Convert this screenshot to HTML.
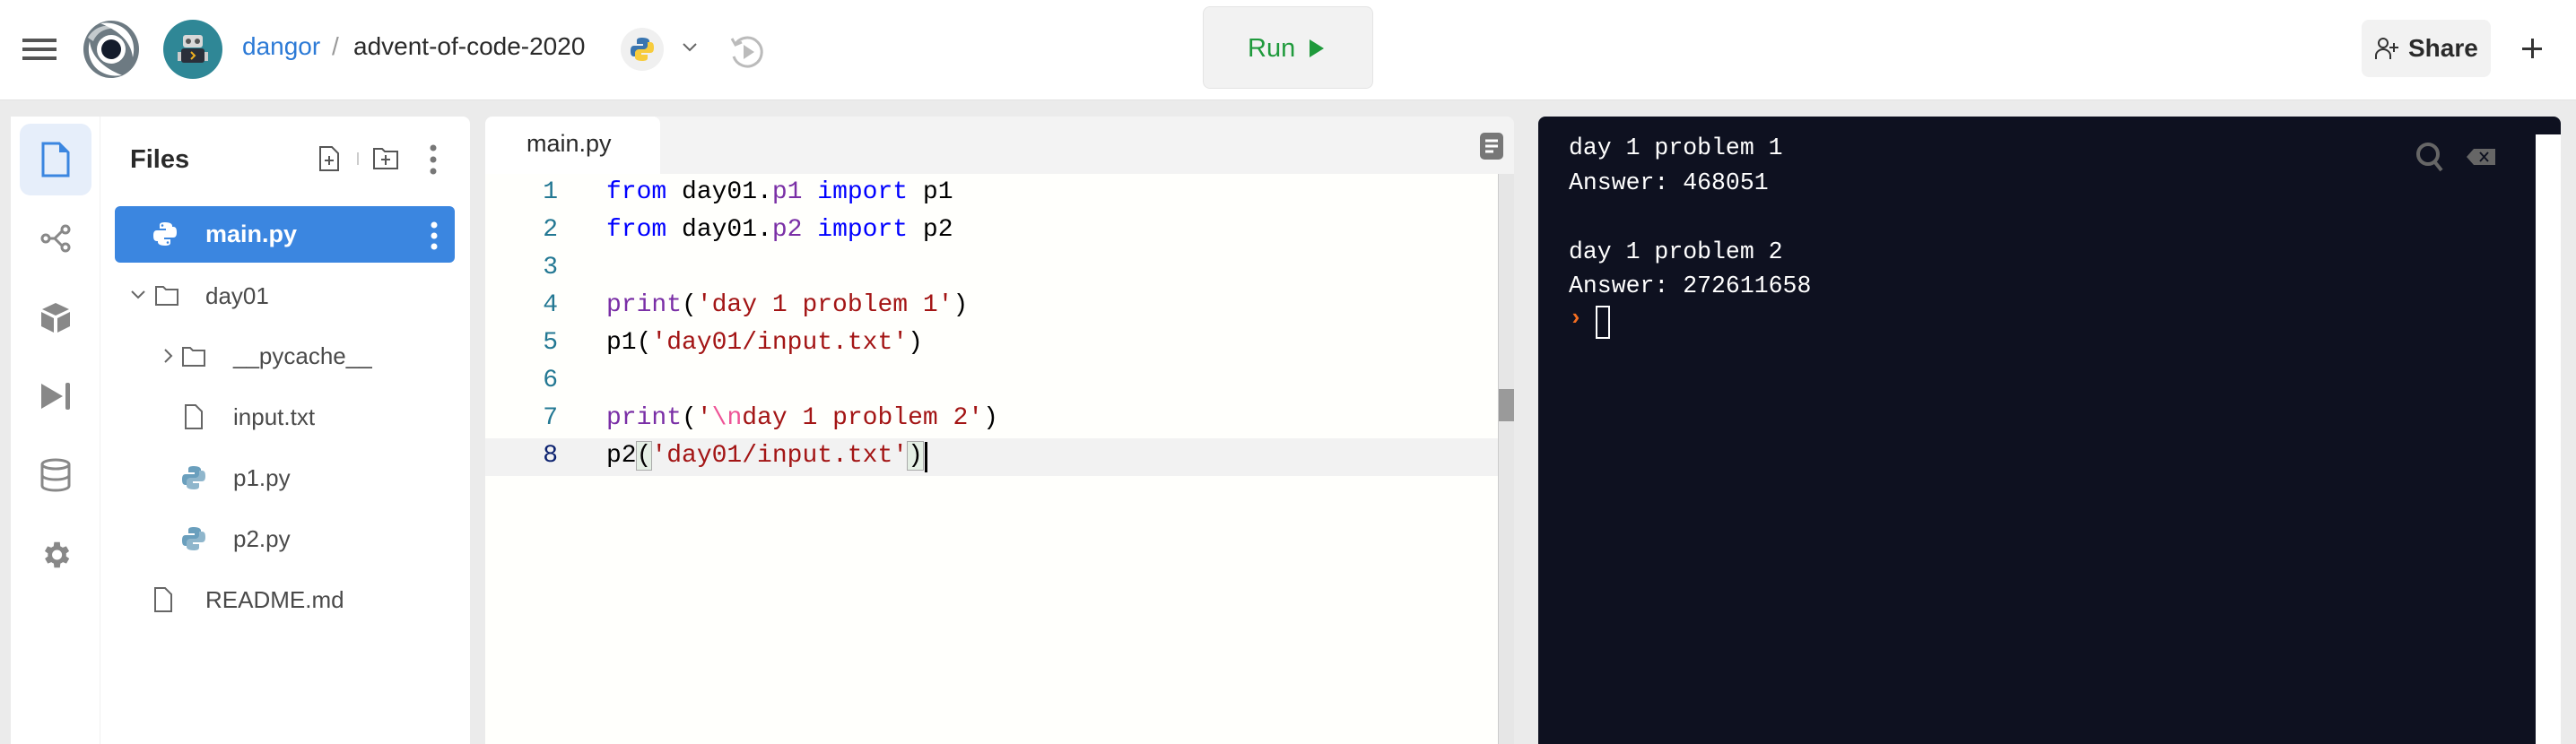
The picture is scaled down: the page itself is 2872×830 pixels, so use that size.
<!DOCTYPE html>
<html><head><meta charset="utf-8"><style>
*{margin:0;padding:0;box-sizing:border-box}
body{width:2872px;height:830px;overflow:hidden;background:#ebebeb;font-family:"Liberation Sans",sans-serif;position:relative}
.a{position:absolute}
.hdr{left:0;top:0;width:2872px;height:112px;background:#fff;border-bottom:1px solid #e2e2e2}
.mono{font-family:"Liberation Mono","DejaVu Sans Mono",monospace}
.ft{font-size:26px;color:#4a4a4a;line-height:30px}
.ln{left:560px;width:62px;text-align:right;color:#237893;font-size:28px}
.cl{left:676px;font-size:28px;color:#000;white-space:pre}
.kw{color:#0000ff}.pu{color:#7a2fa6}.st{color:#a31515}.es{color:#ee5396}
.tl{left:1749px;color:#fff;font-size:26.5px;white-space:pre}
</style></head><body>
<div class="a hdr"></div>
<div class="a" style="left:25px;top:43px;width:38px;height:4px;background:#555"></div>
<div class="a" style="left:25px;top:53px;width:38px;height:4px;background:#555"></div>
<div class="a" style="left:25px;top:63px;width:38px;height:4px;background:#555"></div>
<svg class="a" style="left:92px;top:22px" width="64" height="66" viewBox="0 0 64 66">
<ellipse cx="32" cy="33" rx="31" ry="32" fill="#6d7a82"/>
<path d="M20 4 C44 0 62 18 56 42 C54 24 40 12 20 4 Z" fill="#fff"/>
<path d="M44 62 C20 66 2 48 8 24 C10 42 24 54 44 62 Z" fill="#fff"/>
<path d="M6 20 C14 6 30 4 40 10 C26 8 16 14 12 24 Z" fill="#fff" opacity="0.6"/>
<circle cx="32" cy="33" r="16" fill="#fff"/>
<circle cx="32" cy="33" r="11" fill="#141c2c"/>
</svg>
<svg class="a" style="left:182px;top:22px" width="66" height="66" viewBox="0 0 66 66">
<circle cx="33" cy="33" r="33" fill="#2f8796"/>
<rect x="22" y="17" width="22" height="14" rx="3" fill="#d8d8d8"/>
<circle cx="28" cy="24" r="3" fill="#555"/><circle cx="38" cy="24" r="3" fill="#555"/>
<rect x="20" y="32" width="26" height="16" rx="3" fill="#2a2f3a"/>
<path d="M31 36 l4 4 l-4 4" stroke="#f0b020" stroke-width="2" fill="none"/>
<rect x="16" y="36" width="4" height="10" fill="#ccc"/><rect x="46" y="36" width="4" height="10" fill="#ccc"/>
</svg>
<div class="a" style="left:270px;top:36px;font-size:28px;color:#2c7ad6">dangor</div>
<div class="a" style="left:370px;top:36px;font-size:28px;color:#999">/</div>
<div class="a" style="left:394px;top:36px;font-size:28px;color:#2a2a2a">advent-of-code-2020</div>
<div class="a" style="left:692px;top:31px;width:48px;height:48px;border-radius:50%;background:#f0f0f0"></div>
<svg class="a" style="left:701px;top:40px" width="30" height="30" viewBox="0 0 30 30">
<path d="M15 2c-6 0-6 2-6 4v3h7v2H6c-3 0-4 2-4 6s1 6 4 6h3v-4c0-2 2-4 4-4h6c2 0 4-2 4-4V6c0-2-2-4-8-4z" fill="#3a75b0"/>
<path d="M15 28c6 0 6-2 6-4v-3h-7v-2h10c3 0 4-2 4-6s-1-6-4-6h-3v4c0 2-2 4-4 4h-6c-2 0-4 2-4 4v5c0 2 2 4 8 4z" fill="#f7cc3d"/>
</svg>
<svg class="a" style="left:760px;top:46px" width="18" height="14"><path d="M2 3l7 7 7-7" stroke="#666" stroke-width="2" fill="none"/></svg>
<svg class="a" style="left:810px;top:35px" width="46" height="46" viewBox="0 0 46 46">
<path d="M10 14 A16 16 0 1 1 8 28" stroke="#bbb" stroke-width="3" fill="none"/>
<path d="M6 8 l4 7 l7 -3" stroke="#bbb" stroke-width="3" fill="none"/>
<path d="M19 15 l12 8 l-12 8z" fill="#bbb"/>
</svg>
<div class="a" style="left:1341px;top:7px;width:190px;height:92px;background:#f2f2f2;border:1px solid #e4e4e4;border-radius:8px"></div>
<div class="a" style="left:1391px;top:38px;font-size:29px;color:#1f9a3c">Run</div>
<svg class="a" style="left:1458px;top:42px" width="20" height="24"><path d="M2 2l16 10-16 10z" fill="#1f9a3c"/></svg>
<div class="a" style="left:2633px;top:22px;width:144px;height:64px;background:#f2f2f2;border-radius:8px"></div>
<svg class="a" style="left:2647px;top:40px" width="28" height="28" viewBox="0 0 28 28"><circle cx="10" cy="8" r="5" stroke="#333" stroke-width="2" fill="none"/><path d="M2 26v-4c0-4 4-7 8-7s8 3 8 7v4" stroke="#333" stroke-width="2" fill="none"/><path d="M22 8v10M17 13h10" stroke="#333" stroke-width="2"/></svg>
<div class="a" style="left:2685px;top:38px;font-size:28px;color:#2a2a2a;font-weight:bold">Share</div>
<div class="a" style="left:2812px;top:53px;width:22px;height:3px;background:#333"></div>
<div class="a" style="left:2822px;top:43px;width:3px;height:22px;background:#333"></div>
<div class="a" style="left:12px;top:130px;width:512px;height:700px;background:#fff;border-radius:8px 8px 0 0"></div>
<div class="a" style="left:12px;top:130px;width:100px;height:700px;background:#fff;border-right:1px solid #f0f0f0"></div>
<div class="a" style="left:22px;top:138px;width:80px;height:80px;background:#e6eefa;border-radius:12px"></div>
<svg class="a" style="left:44px;top:158px" width="36" height="40" viewBox="0 0 36 40"><path d="M4 2h18l10 10v26H4z" fill="none" stroke="#3b86e0" stroke-width="3"/><path d="M22 2v10h10z" fill="#3b86e0"/></svg>
<svg class="a" style="left:44px;top:250px" width="36" height="32" viewBox="0 0 36 32"><circle cx="7" cy="16" r="4" fill="none" stroke="#888" stroke-width="3"/><circle cx="29" cy="6" r="4" fill="none" stroke="#888" stroke-width="3"/><circle cx="29" cy="26" r="4" fill="none" stroke="#888" stroke-width="3"/><path d="M11 16h6l8-8M17 16l8 8" stroke="#888" stroke-width="3" fill="none"/></svg>
<svg class="a" style="left:44px;top:336px" width="36" height="36" viewBox="0 0 36 36"><path d="M18 2l15 7-15 7-15-7z" fill="#888"/><path d="M2 12l14 7v16l-14-7z" fill="#888"/><path d="M34 12l-14 7v16l14-7z" fill="#888"/></svg>
<svg class="a" style="left:44px;top:424px" width="36" height="36" viewBox="0 0 36 36"><path d="M2 4l24 14-24 14z" fill="#888"/><rect x="29" y="3" width="5" height="30" rx="2" fill="#888"/></svg>
<svg class="a" style="left:44px;top:510px" width="36" height="40" viewBox="0 0 36 40"><ellipse cx="18" cy="8" rx="15" ry="5" fill="none" stroke="#888" stroke-width="3"/><path d="M3 8v24c0 3 7 5 15 5s15-2 15-5V8M3 20c0 3 7 5 15 5s15-2 15-5" fill="none" stroke="#888" stroke-width="3"/></svg>
<svg class="a" style="left:43px;top:600px" width="38" height="38" viewBox="0 0 24 24"><path fill="#888" d="M19.4 13a7.5 7.5 0 0 0 0-2l2.1-1.6-2-3.5-2.5 1a7 7 0 0 0-1.7-1L15 3h-4l-.4 2.900a7 7 0 0 0-1.7 1l-2.5-1-2 3.5L6.6 11a7.5 7.5 0 0 0 0 2l-2.1 1.6 2 3.5 2.5-1a7 7 0 0 0 1.7 1L11 21h4l.4-2.9a7 7 0 0 0 1.7-1l2.5 1 2-3.5zM13 15.5a3.5 3.5 0 1 1 0-7 3.5 3.5 0 0 1 0 7z"/></svg>
<div class="a" style="left:145px;top:162px;font-size:29px;font-weight:bold;color:#2a2a2a">Files</div>
<svg class="a" style="left:355px;top:162px" width="24" height="30" viewBox="0 0 24 30"><path d="M2 2h13l7 7v19H2z" fill="none" stroke="#555" stroke-width="2"/><path d="M12 12v10M7 17h10" stroke="#555" stroke-width="2"/></svg>
<div class="a" style="left:398px;top:170px;width:2px;height:14px;background:#ccc"></div>
<svg class="a" style="left:415px;top:164px" width="30" height="26" viewBox="0 0 30 26"><path d="M2 2h9l3 3h14v19H2z" fill="none" stroke="#555" stroke-width="2"/><path d="M15 9v11M10 14h10" stroke="#555" stroke-width="2"/></svg>
<svg class="a" style="left:478px;top:160px" width="10" height="36"><circle cx="5" cy="5" r="3.5" fill="#777"/><circle cx="5" cy="18" r="3.5" fill="#777"/><circle cx="5" cy="31" r="3.5" fill="#777"/></svg>
<div class="a" style="left:128px;top:230px;width:379px;height:63px;background:#3b86e0;border-radius:6px"></div>
<svg class="a" style="left:169px;top:246px" width="30" height="30" viewBox="0 0 30 30"><path d="M15 2c-6 0-6 2-6 4v3h7v2H6c-3 0-4 2-4 6s1 6 4 6h3v-4c0-2 2-4 4-4h6c2 0 4-2 4-4V6c0-2-2-4-8-4z" fill="#fff"/><path d="M15 28c6 0 6-2 6-4v-3h-7v-2h10c3 0 4-2 4-6s-1-6-4-6h-3v4c0 2-2 4-4 4h-6c-2 0-4 2-4 4v5c0 2 2 4 8 4z" fill="#fff"/><circle cx="12" cy="5.5" r="1.3" fill="#3b86e0"/><circle cx="18" cy="24.5" r="1.3" fill="#3b86e0"/></svg>
<div class="a" style="left:229px;top:246px;font-size:27px;color:#fff;font-weight:bold">main.py</div>
<svg class="a" style="left:479px;top:246px" width="10" height="34"><circle cx="5" cy="5" r="3.5" fill="#fff"/><circle cx="5" cy="17" r="3.5" fill="#fff"/><circle cx="5" cy="29" r="3.5" fill="#fff"/></svg>
<svg class="a" style="left:145px;top:322px" width="18" height="14"><path d="M2 3l7 7 7-7" stroke="#666" stroke-width="2" fill="none"/></svg>
<svg class="a" style="left:172px;top:318px" width="28" height="24" viewBox="0 0 28 24"><path d="M2 2h8l3 3h13v17H2z" fill="none" stroke="#666" stroke-width="2"/></svg>
<div class="a ft" style="left:229px;top:315px">day01</div>
<svg class="a" style="left:181px;top:388px" width="12" height="18"><path d="M3 2l7 7-7 7" stroke="#666" stroke-width="2" fill="none"/></svg>
<svg class="a" style="left:202px;top:386px" width="28" height="24" viewBox="0 0 28 24"><path d="M2 2h8l3 3h13v17H2z" fill="none" stroke="#666" stroke-width="2"/></svg>
<div class="a ft" style="left:260px;top:382px">__pycache__</div>
<svg class="a" style="left:205px;top:450px" width="22" height="30" viewBox="0 0 22 30"><path d="M2 2h11l7 7v19H2z" fill="none" stroke="#666" stroke-width="2"/></svg>
<div class="a ft" style="left:260px;top:450px">input.txt</div>
<svg class="a" style="left:201px;top:518px" width="30" height="30" viewBox="0 0 30 30"><path d="M15 2c-6 0-6 2-6 4v3h7v2H6c-3 0-4 2-4 6s1 6 4 6h3v-4c0-2 2-4 4-4h6c2 0 4-2 4-4V6c0-2-2-4-8-4z" fill="#6a9fbd"/><path d="M15 28c6 0 6-2 6-4v-3h-7v-2h10c3 0 4-2 4-6s-1-6-4-6h-3v4c0 2-2 4-4 4h-6c-2 0-4 2-4 4v5c0 2 2 4 8 4z" fill="#8fb6cc"/></svg>
<div class="a ft" style="left:260px;top:518px">p1.py</div>
<svg class="a" style="left:201px;top:586px" width="30" height="30" viewBox="0 0 30 30"><path d="M15 2c-6 0-6 2-6 4v3h7v2H6c-3 0-4 2-4 6s1 6 4 6h3v-4c0-2 2-4 4-4h6c2 0 4-2 4-4V6c0-2-2-4-8-4z" fill="#6a9fbd"/><path d="M15 28c6 0 6-2 6-4v-3h-7v-2h10c3 0 4-2 4-6s-1-6-4-6h-3v4c0 2-2 4-4 4h-6c-2 0-4 2-4 4v5c0 2 2 4 8 4z" fill="#8fb6cc"/></svg>
<div class="a ft" style="left:260px;top:586px">p2.py</div>
<svg class="a" style="left:171px;top:654px" width="22" height="30" viewBox="0 0 22 30"><path d="M2 2h11l7 7v19H2z" fill="none" stroke="#666" stroke-width="2"/></svg>
<div class="a ft" style="left:229px;top:654px">README.md</div>
<div class="a" style="left:541px;top:130px;width:1147px;height:700px;background:#f3f3f3;border-radius:8px 8px 0 0"></div>
<div class="a" style="left:541px;top:130px;width:195px;height:64px;background:#fff;border-radius:8px 8px 0 0"></div>
<div class="a" style="left:587px;top:145px;font-size:27px;color:#2a2a2a">main.py</div>
<svg class="a" style="left:1649px;top:147px" width="28" height="32"><rect x="1" y="1" width="26" height="30" rx="5" fill="#777"/><path d="M7 10h14M7 16h14M7 22h9" stroke="#fff" stroke-width="3"/></svg>
<div class="a" style="left:541px;top:194px;width:1129px;height:636px;background:#fffffc"></div>
<div class="a" style="left:1670px;top:194px;width:18px;height:636px;background:#e6e6e6;border-left:1px solid #ccc"></div>
<div class="a" style="left:1671px;top:434px;width:17px;height:36px;background:#9a9a9a"></div>
<div class="a" style="left:541px;top:489px;width:1129px;height:42px;background:#f2f2f2"></div>
<div class="a mono ln" style="top:194px;line-height:42px">1<br>2<br>3<br>4<br>5<br>6<br>7<br><span style="color:#0b216f">8</span></div>
<div class="a mono cl" style="top:194px;line-height:42px"><span class="kw">from</span> day01.<span class="pu">p1</span> <span class="kw">import</span> p1
<span class="kw">from</span> day01.<span class="pu">p2</span> <span class="kw">import</span> p2

<span class="pu">print</span>(<span class="st">'day 1 problem 1'</span>)
p1(<span class="st">'day01/input.txt'</span>)

<span class="pu">print</span>(<span class="st">'<span class="es">\n</span>day 1 problem 2'</span>)
p2<span style="outline:1px solid #aaa;background:#e4efe4">(</span><span class="st">'day01/input.txt'</span><span style="outline:1px solid #aaa;background:#e4efe4">)</span></div>
<div class="a" style="left:1031px;top:493px;width:3px;height:34px;background:#000"></div>
<div class="a" style="left:1715px;top:130px;width:1140px;height:700px;background:#0e1120;border-radius:8px 8px 0 0"></div>
<div class="a" style="left:2827px;top:150px;width:28px;height:680px;background:#fff"></div>
<div class="a mono tl" style="top:146px;line-height:38.5px">day 1 problem 1
Answer: 468051

day 1 problem 2
Answer: 272611658</div>
<div class="a mono" style="left:1749px;top:340px;font-size:26px;color:#f36e21;font-weight:bold">›</div>
<div class="a" style="left:1779px;top:341px;width:16px;height:37px;border:2px solid #fff"></div>
<svg class="a" style="left:2692px;top:158px" width="36" height="36"><circle cx="15" cy="14" r="11" stroke="#666" stroke-width="4" fill="none"/><path d="M22 22l8 10" stroke="#666" stroke-width="4"/></svg>
<svg class="a" style="left:2748px;top:164px" width="36" height="22"><path d="M10 2h24v18H10L2 11z" fill="#666"/><path d="M17 6l9 10M26 6l-9 10" stroke="#0e1120" stroke-width="2"/></svg>
</body></html>
